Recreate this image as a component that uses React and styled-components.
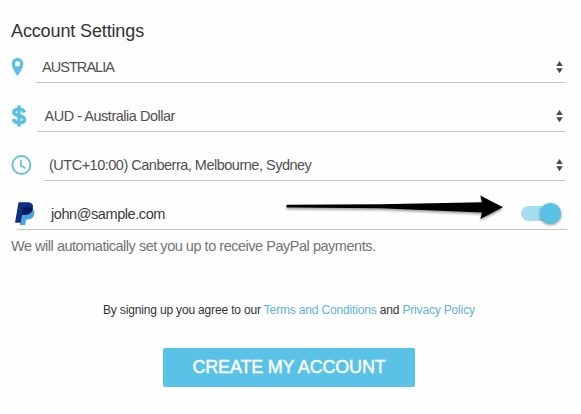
import React from "react";
import styled, { createGlobalStyle } from "styled-components";

const GlobalStyle = createGlobalStyle`
  * {
    box-sizing: border-box;
  }

  body {
    margin: 0;
    background: #fff;
    font-family: "Liberation Sans", Arial, sans-serif;
  }
`;

const Page = styled.main`
  position: relative;
  width: 581px;
  height: 414px;
  padding-top: 19px;
  overflow: hidden;
  background: #fefefe;
`;

const Title = styled.h1`
  margin: 0 0 0 11px;
  height: 15px;
  color: #333;
  font-size: 18px;
  font-weight: 400;
  line-height: 24px;
  letter-spacing: -0.13px;
  white-space: nowrap;
`;

const Row = styled.div`
  display: flex;
  height: 49px;
  padding-left: 11px;
`;

const IconSlot = styled.div`
  flex: none;
  display: flex;
  align-items: flex-end;
  width: ${({ $width }) => $width}px;
  padding-bottom: ${({ $lift }) => $lift}px;

  svg {
    display: block;
    overflow: visible;
  }
`;

const Field = styled.div`
  display: flex;
  align-items: flex-end;
  justify-content: space-between;
  width: ${({ $width }) => $width}px;
  padding: 0 2px 7px ${({ $pad }) => $pad}px;
  border-bottom: 1px solid #c6c6c6;

  svg {
    margin-bottom: 2px;
  }
`;

const Value = styled.span`
  color: ${({ $dark }) => ($dark ? "#3a3a3a" : "#505050")};
  font-size: 14.5px;
  line-height: 16px;
  letter-spacing: ${({ $track }) => $track}px;
  white-space: nowrap;
`;

const PayPalRow = styled.div`
  display: flex;
  align-items: flex-end;
  width: 550px;
  height: 49px;
  margin-left: 17px;
  border-bottom: 1px solid #c6c6c6;
`;

const PayPalSlot = styled(IconSlot)`
  margin-left: -2px;
`;

const Email = styled(Value)`
  flex: 1;
  padding: 0 0 7px 14px;
`;

const Switch = styled.button`
  display: flex;
  align-items: center;
  justify-content: flex-end;
  width: 40px;
  height: 15px;
  margin: 0 6px 8px 0;
  padding: 0;
  border: 0;
  border-radius: 8px;
  background: #a5def1;
`;

const Knob = styled.span`
  flex: none;
  width: 21px;
  height: 21px;
  border-radius: 50%;
  background: #59c1e6;
  box-shadow: 0 1px 3px rgba(0, 0, 0, 0.45);
`;

const Note = styled.p`
  margin: 7px 0 0 11px;
  color: #737373;
  font-size: 14.5px;
  line-height: 18px;
  letter-spacing: -0.475px;
  white-space: nowrap;
`;

const Terms = styled.p`
  margin: 47px 0 0 103px;
  color: #333;
  font-size: 12px;
  line-height: 16px;
  letter-spacing: -0.165px;
  white-space: nowrap;

  a {
    color: #5db4dc;
    text-decoration: none;
  }
`;

const Submit = styled.button`
  display: block;
  width: 252px;
  height: 39px;
  margin: 30px 0 0 163px;
  padding: 0;
  border: 0;
  border-radius: 2px;
  color: #fff;
  background: #5bc2e7;
  font-family: inherit;
  font-size: 18px;
  line-height: 39px;
  letter-spacing: -0.2px;
  -webkit-text-stroke: 0.4px #fff;
  white-space: nowrap;
`;

const Pointer = styled.svg`
  position: absolute;
  left: 280px;
  top: 190px;
  filter: drop-shadow(0 2px 1px rgba(0, 0, 0, 0.35));
`;

const PinIcon = () => (
  <svg width="13" height="18" viewBox="0 0 13 18">
    <path
      fill="#5bc0e4"
      fillRule="evenodd"
      d="M6.5 0C3.2 0 .7 2.6.7 5.9c0 4.2 5.8 12.1 5.8 12.1s5.8-7.9 5.8-12.1C12.3 2.6 9.8 0 6.5 0Zm0 3.2a2.6 2.6 0 1 1 0 5.2 2.6 2.6 0 0 1 0-5.2Z"
    />
  </svg>
);

const DollarIcon = () => (
  <svg width="16" height="22" viewBox="0 0 16 22" fill="none" stroke="#5bc0e4">
    <path
      strokeWidth="3.5"
      d="M13.4 7.4C12.7 5 10.8 4.2 8 4.2 5 4.2 2.8 5.2 2.8 7.3c0 2.4 2.4 2.8 5.4 3.4 3.1.6 5.3 1.4 5.3 3.8 0 2.3-2.2 3.3-5.3 3.3-3.2 0-5.2-1.2-5.8-3.8"
    />
    <path strokeWidth="3.4" d="M8 .4v21.2" />
  </svg>
);

const ClockIcon = () => (
  <svg width="20" height="20" viewBox="0 0 20 20" fill="none" stroke="#5fbedf">
    <circle cx="10.4" cy="10" r="9" strokeWidth="1.8" />
    <path strokeWidth="1.6" d="M9.9 4.8v5.9l4.6 2.6" />
  </svg>
);

const PayPalIcon = () => (
  <svg width="20" height="23" viewBox="0 0 20 23">
    <path
      fill="#4aa3df"
      d="M7 7h10.8c1.4 1.3 1.8 3.1 1.4 5.2-.8 3.8-3.3 5.2-6.7 5.2h-1.4L10.2 23H4.8Z"
    />
    <path
      fill="#102f83"
      d="M3.5.3h9c4.3 0 6.2 2.2 5.3 6.3-.9 4.3-3.8 6.2-8.1 6.2H7.1L5.7 20.7H0Z"
    />
    <path
      fill="#061b5c"
      d="M7.8 5.2h6.8c1.3 0 2.4.4 3.2 1.3-.8 4.3-3.7 6.3-8.1 6.3H6.5Z"
    />
  </svg>
);

const SortArrows = () => (
  <svg width="7" height="12" viewBox="0 0 7 12">
    <path fill="#4a4a4a" d="M3.5 0 6.8 5H.2ZM.2 7.2h6.6L3.5 12.2Z" />
  </svg>
);

const SelectRow = ({ icon, slot, lift, width, pad, track, children }) => (
  <Row>
    <IconSlot $width={slot} $lift={lift}>
      {icon}
    </IconSlot>
    <Field $width={width} $pad={pad}>
      <Value $track={track}>{children}</Value>
      <SortArrows />
    </Field>
  </Row>
);

const App = () => (
  <>
    <GlobalStyle />
    <Page>
      <Title>Account Settings</Title>

      <SelectRow icon={<PinIcon />} slot={25} lift={7} width={529} pad={6} track={-0.95}>
        AUSTRALIA
      </SelectRow>
      <SelectRow icon={<DollarIcon />} slot={27} lift={5} width={527} pad={6.5} track={-0.48}>
        AUD - Australia Dollar
      </SelectRow>
      <SelectRow icon={<ClockIcon />} slot={33} lift={6} width={521} pad={5} track={-0.495}>
        (UTC+10:00) Canberra, Melbourne, Sydney
      </SelectRow>

      <PayPalRow>
        <PayPalSlot $width={22} $lift={4}>
          <PayPalIcon />
        </PayPalSlot>
        <Email $dark $track={-0.42}>
          john@sample.com
        </Email>
        <Switch role="switch" aria-checked="true" aria-label="PayPal payments">
          <Knob />
        </Switch>
      </PayPalRow>

      <Note>We will automatically set you up to receive PayPal payments.</Note>

      <Terms>
        By signing up you agree to our <a>Terms and Conditions</a> and{" "}
        <a>Privacy Policy</a>
      </Terms>

      <Submit>CREATE MY ACCOUNT</Submit>

      {/* callout arrow towards the switch */}
      <Pointer width="230" height="36" viewBox="0 0 230 36">
        <path d="M7 14.8 100 14.2 202 12.2 200.3 5.5 223 17.2 200.3 29 202 22.4 100 18.3 7 17.6Q5.4 16.2 7 14.8Z" />
      </Pointer>
    </Page>
  </>
);

export default App;
